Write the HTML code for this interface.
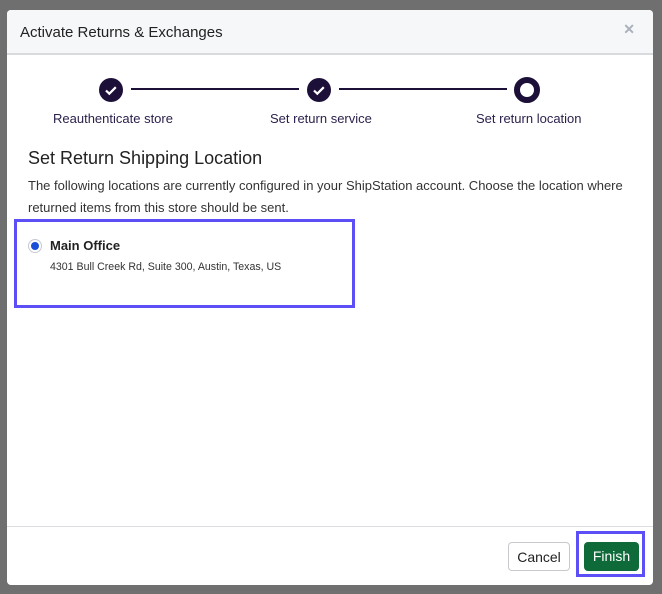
<!DOCTYPE html>
<html><head><style>
body{margin:0;width:662px;height:594px;background:#6f6f70;font-family:"Liberation Sans",sans-serif;position:relative;overflow:hidden}
.dlg{position:absolute;left:7px;top:10px;width:646px;height:575px;background:#fff;border-radius:4px;overflow:hidden}
.hdr{height:43px;background:#f6f7f9;border-bottom:2px solid #d8dadd;position:relative}
.hdr span{position:absolute;left:13px;top:14px;font-size:15px;color:#222}
.x{position:absolute;right:18px;top:11px;color:#aab1ba;font-size:14px;font-weight:bold}
.abs{position:absolute}
.circ{position:absolute;width:24px;height:24px;border-radius:50%;background:#1d1038}
.line{position:absolute;height:2px;background:#1d1038;top:78px}
.lbl{position:absolute;top:101px;font-size:13px;color:#2a1f4a}
</style></head><body>
<div class="dlg">
<div class="hdr"><span>Activate Returns &amp; Exchanges</span><div class="x">✕</div></div>
<div class="circ" style="left:92px;top:68px"><svg width="24" height="24"><path d="M7 12.5l3.3 3.2 6.5-6.5" fill="none" stroke="#fff" stroke-width="2.2"/></svg></div>
<div class="circ" style="left:300px;top:68px"><svg width="24" height="24"><path d="M7 12.5l3.3 3.2 6.5-6.5" fill="none" stroke="#fff" stroke-width="2.2"/></svg></div>
<div class="circ" style="background:#fff;border:6px solid #1d1038;box-sizing:border-box;width:26px;height:26px;top:67px;left:507px"></div>
<div class="line" style="left:124px;width:168px"></div>
<div class="line" style="left:332px;width:168px"></div>
<div class="lbl" style="left:46px">Reauthenticate store</div>
<div class="lbl" style="left:263px">Set return service</div>
<div class="lbl" style="left:469px">Set return location</div>
<div class="abs" style="left:21px;top:138px;font-size:18px;color:#222">Set Return Shipping Location</div>
<div class="abs" style="left:21px;top:165px;width:600px;font-size:13px;line-height:22px;color:#333">The following locations are currently configured in your ShipStation account. Choose the location where returned items from this store should be sent.</div>
<div class="abs" style="left:7px;top:209px;width:335px;height:83px;border:3px solid #5b4ff5"></div>
<div class="abs" style="left:21px;top:229px;width:14px;height:14px;border-radius:50%;border:1px solid #c5cad3;box-sizing:border-box"><div style="width:8px;height:8px;border-radius:50%;background:#1b4fd8;margin:2px"></div></div>
<div class="abs" style="left:43px;top:228px;font-size:13px;font-weight:bold;color:#222">Main Office</div>
<div class="abs" style="left:43px;top:251px;font-size:10.6px;color:#333">4301 Bull Creek Rd, Suite 300, Austin, Texas, US</div>
<div class="abs" style="left:0;top:516px;width:646px;height:1px;background:#dcdde0"></div>
<div class="abs" style="left:501px;top:532px;width:62px;height:29px;border:1px solid #c7c9cd;border-radius:4px;box-sizing:border-box;font-size:14px;text-align:center;line-height:28px;color:#222">Cancel</div>
<div class="abs" style="left:569px;top:521px;width:69px;height:46px;border:3px solid #5b4ff5;box-sizing:border-box"></div>
<div class="abs" style="left:577px;top:532px;width:55px;height:29px;background:#0f6a3a;border-radius:4px;font-size:14px;color:#fff;text-align:center;line-height:29px">Finish</div>
</div>
</body></html>
